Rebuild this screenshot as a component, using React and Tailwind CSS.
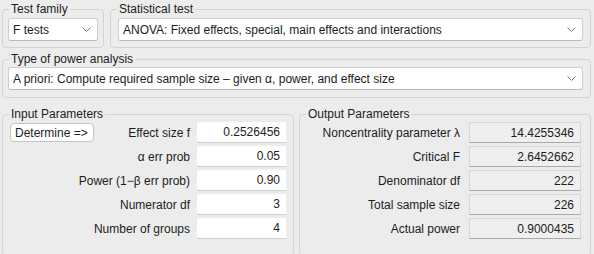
import React from 'react';

const font = { fontFamily: '"Liberation Sans", Arial, sans-serif' };

const Chevron = () => (
  <svg width="9" height="5" viewBox="0 0 9 5" className="shrink-0">
    <path d="M0.5 0.5 L4.5 4.5 L8.5 0.5" fill="none" stroke="#7a7a7a" strokeWidth="1" />
  </svg>
);

const Group = ({ title, className = '', children }) => (
  <fieldset className={`border border-[#d3d3d3] rounded-[4px] min-w-0 ${className}`}>
    <legend className="ml-[6px] px-[2px] text-[12px] leading-[14px] text-[#1c1c1c]">{title}</legend>
    {children}
  </fieldset>
);

const Select = ({ value }) => (
  <div className="flex items-center justify-between h-[23px] bg-white border border-[#cfcfcf] border-b-[#b9b9b9] rounded-[3px] pl-[4px] pr-[6px] text-[12px] text-[#1c1c1c]">
    <span className="truncate">{value}</span>
    <Chevron />
  </div>
);

const inputs = [
  ['Effect size f', '0.2526456'],
  ['\u03b1 err prob', '0.05'],
  ['Power (1\u2212\u03b2 err prob)', '0.90'],
  ['Numerator df', '3'],
  ['Number of groups', '4'],
];

const outputs = [
  ['Noncentrality parameter \u03bb', '14.4255346'],
  ['Critical F', '2.6452662'],
  ['Denominator df', '222'],
  ['Total sample size', '226'],
  ['Actual power', '0.9000435'],
];

export default function App() {
  return (
    <div className="w-[594px] min-h-[254px] bg-[#ececec] pl-[2px] pr-[3px] pt-[2px] text-[#1c1c1c]" style={font}>
      {/* Test family + statistical test */}
      <div className="flex gap-[6px]">
        <Group title="Test family" className="w-[102px]">
          <div className="pl-[5px] pr-[5px] pt-[2px] pb-[6px]">
            <Select value="F tests" />
          </div>
        </Group>
        <Group title="Statistical test" className="flex-1">
          <div className="pl-[7px] pr-[7px] pt-[2px] pb-[6px]">
            <Select value="ANOVA: Fixed effects, special, main effects and interactions" />
          </div>
        </Group>
      </div>

      {/* Type of power analysis */}
      <Group title="Type of power analysis" className="mt-[4px]">
        <div className="pl-[5px] pr-[7px] pt-[1px] pb-[7px]">
          <Select value={'A priori: Compute required sample size \u2013 given \u03b1, power, and effect size'} />
        </div>
      </Group>

      {/* Parameters */}
      <div className="flex gap-[5px] mt-[9px]">
        <Group title="Input Parameters" className="w-[292px]">
          <div className="flex flex-col gap-[3px] pl-[7px] pr-[7px] pt-[1px] pb-[16px]">
            {inputs.map(([label, value], i) => (
              <div key={label} className="flex items-center h-[21px] text-[12px]">
                {i === 0 && (
                  <button className="h-[19px] w-[84px] bg-white border border-[#c4c4c4] rounded-[4px] text-left pl-[4px] text-[12px] text-[#1c1c1c]">
                    Determine =&gt;
                  </button>
                )}
                <span className="flex-1 text-right pr-[7px]">{label}</span>
                <div className="w-[89px] h-[21px] bg-white border-b border-[#cfcfcf] flex items-center justify-end pr-[6px]">
                  {value}
                </div>
              </div>
            ))}
          </div>
        </Group>
        <Group title="Output Parameters" className="flex-1">
          <div className="flex flex-col gap-[3px] pl-[7px] pr-[9px] pt-[1px] pb-[16px]">
            {outputs.map(([label, value]) => (
              <div key={label} className="flex items-center h-[21px] text-[12px]">
                <span className="flex-1 text-right pr-[9px]">{label}</span>
                <div className="w-[112px] h-[21px] bg-[#efefef] border border-[#d6d6d6] border-b-[#a9a9a9] flex items-center justify-end pr-[6px]">
                  {value}
                </div>
              </div>
            ))}
          </div>
        </Group>
      </div>
    </div>
  );
}
